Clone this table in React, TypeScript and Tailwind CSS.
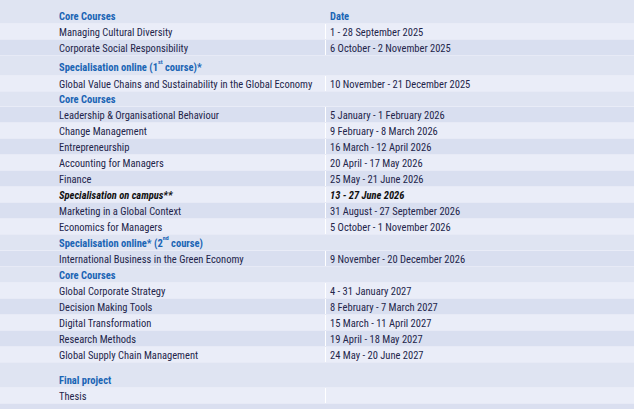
import React from 'react';

type Row = {
  kind: 'head' | 'row';
  label?: React.ReactNode;
  date?: React.ReactNode;
  tone?: 'light' | 'dark';
  h?: string;
  italic?: boolean;
};

const rows: Row[] = [
  { kind: 'head', label: 'Core Courses', date: 'Date', h: 'h-[24px] pt-[9px]' },
  { kind: 'row', label: 'Managing Cultural Diversity', date: '1 - 28 September 2025', tone: 'light' },
  { kind: 'row', label: 'Corporate Social Responsibility', date: '6 October - 2 November 2025', tone: 'dark' },
  {
    kind: 'head',
    label: (
      <>
        Specialisation online (1<sup className="text-[6px] align-[4px]">st</sup> course)*
      </>
    ),
    h: 'h-[20px] pt-[4px]',
  },
  { kind: 'row', label: 'Global Value Chains and Sustainability in the Global Economy', date: '10 November - 21 December 2025', tone: 'light' },
  { kind: 'head', label: 'Core Courses', h: 'h-[15px]' },
  { kind: 'row', label: 'Leadership & Organisational Behaviour', date: '5 January - 1 February 2026', tone: 'dark' },
  { kind: 'row', label: 'Change Management', date: '9 February - 8 March 2026', tone: 'light' },
  { kind: 'row', label: 'Entrepreneurship', date: '16 March - 12 April 2026', tone: 'dark' },
  { kind: 'row', label: 'Accounting for Managers', date: '20 April - 17 May 2026', tone: 'light' },
  { kind: 'row', label: 'Finance', date: '25 May - 21 June 2026', tone: 'dark' },
  { kind: 'row', label: 'Specialisation on campus**', date: '13 - 27 June 2026', tone: 'light', italic: true },
  { kind: 'row', label: 'Marketing in a Global Context', date: '31 August - 27 September 2026', tone: 'dark' },
  { kind: 'row', label: 'Economics for Managers', date: '5 October - 1 November 2026', tone: 'light' },
  {
    kind: 'head',
    label: (
      <>
        Specialisation online* (2<sup className="text-[6px] align-[4px]">nd</sup> course)
      </>
    ),
  },
  { kind: 'row', label: 'International Business in the Green Economy', date: '9 November - 20 December 2026', tone: 'dark' },
  { kind: 'head', label: 'Core Courses' },
  { kind: 'row', label: 'Global Corporate Strategy', date: '4 - 31 January 2027', tone: 'light' },
  { kind: 'row', label: 'Decision Making Tools', date: '8 February - 7 March 2027', tone: 'dark' },
  { kind: 'row', label: 'Digital Transformation', date: '15 March - 11 April 2027', tone: 'light' },
  { kind: 'row', label: 'Research Methods', date: '19 April - 18 May 2027', tone: 'dark' },
  { kind: 'row', label: 'Global Supply Chain Management', date: '24 May - 20 June 2027', tone: 'light' },
  { kind: 'head', label: 'Final project', h: 'h-[25px] pt-[10px]' },
  { kind: 'row', label: 'Thesis', date: '', tone: 'light' },
];

const App: React.FC = () => {
  return (
    <div
      className="w-[634px] h-[409px] overflow-hidden bg-[#dadff0] text-[10.5px] leading-[15px] text-[#23254a]"
      style={{ fontFamily: '"Liberation Sans Narrow", "Roboto Condensed", "Open Sans", sans-serif' }}
    >
      {rows.map((r, i) => {
        if (r.kind === 'head') {
          return (
            <div
              key={i}
              className={`flex border-b border-[#e9ecf7] bg-[#dfe4f2] font-bold text-[#1a65b5] ${r.h ?? 'h-[16px] pt-[1px]'}`}
            >
              <div className="w-[326px] pl-[59px]">{r.label}</div>
              <div className="flex-1 pl-[4px]">{r.date}</div>
            </div>
          );
        }
        const bg = r.tone === 'light' ? 'bg-[#eaedf8]' : 'bg-[#d9dff0]';
        return (
          <div key={i} className={`flex h-[16px] border-b border-[#e7eaf6] ${bg} ${r.italic ? 'italic font-bold text-[#111]' : ''}`}>
            <div className="w-[326px] pl-[59px] pt-[1px] border-r border-white truncate">{r.label}</div>
            <div className="flex-1 pl-[4px] pt-[1px]">{r.date}</div>
          </div>
        );
      })}
    </div>
  );
};

export default App;
